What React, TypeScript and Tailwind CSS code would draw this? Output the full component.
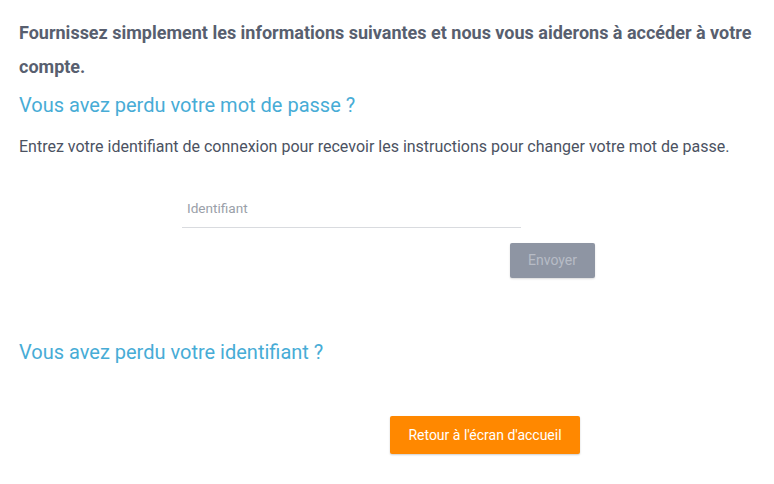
import React from "react";

export default function App() {
  return (
    <div className="w-[774px] h-[484px] bg-white text-[#5b6272]" style={{ fontFamily: "Roboto, 'Liberation Sans', sans-serif" }}>
      <div className="px-[19px] pt-[16px]">
        <p className="text-[18px] font-bold leading-[34px] text-[#585f6f] w-[748px]">
          Fournissez simplement les informations suivantes et nous vous aiderons à accéder à votre compte.
        </p>
        <h2 className="mt-[9px] text-[20px] leading-[24px] text-[#47acd6]">Vous avez perdu votre mot de passe ?</h2>
        <p className="mt-[18px] text-[16px] leading-[24px] text-[#4b5262]">
          Entrez votre identifiant de connexion pour recevoir les instructions pour changer votre mot de passe.
        </p>
        <div className="mt-[29px] ml-[163px] w-[339px]">
          <input
            className="w-full h-[40px] border-b border-[#d9dbdf] text-[13.6px] text-[#4b5262] outline-none placeholder:text-[#9a9fa9] px-[5px]"
            placeholder="Identifiant"
          />
        </div>
        <div className="mt-[15px] ml-[491px]">
          <button className="w-[85px] h-[35px] rounded-[2px] bg-[#8e95a3] text-[#b7bcc6] text-[14px] shadow-[0_1px_2px_rgba(0,0,0,0.15)]">
            Envoyer
          </button>
        </div>
        <h2 className="mt-[62px] text-[20px] leading-[24px] text-[#47acd6]">Vous avez perdu votre identifiant ?</h2>
        <div className="mt-[52px] ml-[371px]">
          <button className="w-[190px] h-[38px] rounded-[2px] bg-[#ff8800] text-white text-[14px] shadow-[0_1px_2px_rgba(0,0,0,0.2)]">
            Retour à l'écran d'accueil
          </button>
        </div>
      </div>
    </div>
  );
}
